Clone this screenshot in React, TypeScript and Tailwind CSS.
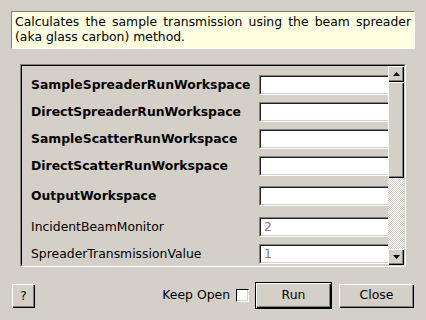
const raised =
  'shadow-[inset_1px_1px_0_#ffffff,inset_-1px_-1px_0_#000000,inset_-2px_-2px_0_#808080]'

const rows = [
  { label: 'SampleSpreaderRunWorkspace', bold: true, mt: 'mt-[9px]', value: '' },
  { label: 'DirectSpreaderRunWorkspace', bold: true, mt: 'mt-[7px]', value: '' },
  { label: 'SampleScatterRunWorkspace', bold: true, mt: 'mt-[7px]', value: '' },
  { label: 'DirectScatterRunWorkspace', bold: true, mt: 'mt-[7px]', value: '' },
  { label: 'OutputWorkspace', bold: true, mt: 'mt-[10px]', value: '' },
  { label: 'IncidentBeamMonitor', bold: false, mt: 'mt-[11px]', value: '2' },
  { label: 'SpreaderTransmissionValue', bold: false, mt: 'mt-[7px]', value: '1' },
]

function Arrow({ down }: { down?: boolean }) {
  return (
    <svg width="7" height="4" viewBox="0 0 7 4">
      <polygon points={down ? '0,0 7,0 3.5,4' : '0,4 7,4 3.5,0'} fill="#000" />
    </svg>
  )
}

export default function App() {
  return (
    <div className="w-[426px] h-[320px] bg-[#d4d0c8] flex flex-col font-['DejaVu_Sans',sans-serif] text-[12.4px] text-black overflow-hidden">
      {/* Description */}
      <div className="mx-[11px] mt-[11px] h-[38px] bg-[#ffffe1] border border-t-[#808080] border-l-[#808080] border-b-white border-r-white px-[3px] pt-[2px] leading-[15px] text-justify">
        Calculates the sample transmission using the beam spreader (aka glass carbon) method.
      </div>

      {/* Property list */}
      <div className="ml-[20px] mt-[15px] w-[386px] h-[203px] border border-t-[#808080] border-l-[#808080] border-b-white border-r-white">
        <div className="h-full flex border border-t-black border-l-black border-b-[#d4d0c8] border-r-[#d4d0c8]">
          <div className="flex-1 overflow-hidden flex flex-col">
            {rows.map(row => (
              <div key={row.label} className={`flex items-center h-[20px] pl-[9px] ${row.mt}`}>
                <div className={`w-[228px] shrink-0 whitespace-nowrap pt-[1px] ${row.bold ? 'font-bold' : ''}`}>
                  {row.label}
                </div>
                <div className="w-[150px] shrink-0 h-[20px] border border-t-[#808080] border-l-[#808080] border-b-white border-r-white">
                  <div className="h-full bg-white border border-t-[#202020] border-l-[#202020] border-b-[#d4d0c8] border-r-[#d4d0c8] pl-[3px] flex items-center text-[#808080]">
                    {row.value}
                  </div>
                </div>
              </div>
            ))}
          </div>

          {/* Scrollbar */}
          <div className="w-[16px] flex flex-col">
            <div className={`h-[16px] bg-[#d4d0c8] flex items-center justify-center pb-[1px] ${raised}`}>
              <Arrow />
            </div>
            <div className={`h-[96px] bg-[#d4d0c8] ${raised}`} />
            <div className="flex-1 bg-[#e9e7e3] bg-[image:repeating-conic-gradient(#ffffff_0%_25%,#d4d0c8_0%_50%)] bg-[length:2px_2px]" />
            <div className={`h-[16px] bg-[#d4d0c8] flex items-center justify-center pb-[1px] ${raised}`}>
              <Arrow down />
            </div>
          </div>
        </div>
      </div>

      {/* Buttons */}
      <div className="mt-[15px] flex items-center h-[27px] px-[12px]">
        <button className={`w-[23px] h-[24px] flex items-center justify-center text-[12px] ${raised}`}>
          ?
        </button>
        <div className="flex-1" />
        <span className="whitespace-nowrap">Keep Open</span>
        <div className="ml-[6px] w-[13px] h-[13px] bg-white border border-t-black border-l-black border-b-white border-r-white shadow-[inset_-1px_-1px_0_#d4d0c8]" />
        <button className="ml-[6px] w-[77px] h-[27px] border border-black">
          <div className={`h-full flex items-center justify-center ${raised}`}>Run</div>
        </button>
        <button className={`ml-[7px] w-[75px] h-[24px] flex items-center justify-center ${raised}`}>
          Close
        </button>
      </div>
    </div>
  )
}
